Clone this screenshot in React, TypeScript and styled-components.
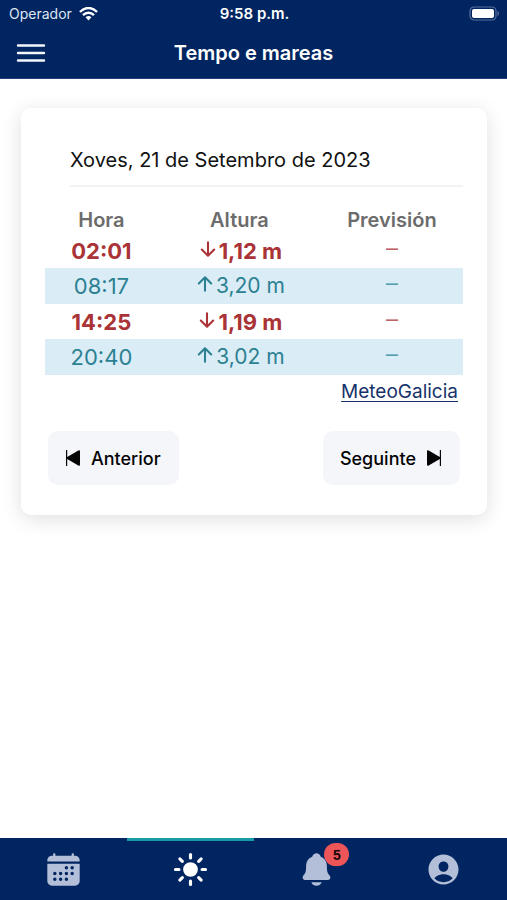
import React from "react";
import styled, { createGlobalStyle } from "styled-components";
import {
  IoArrowDown,
  IoArrowUp,
  IoCalendar,
  IoNotifications,
  IoPersonCircle,
  IoRemoveOutline,
  IoSunny,
} from "react-icons/io5";

const navy = "#002561";

const GlobalStyle = createGlobalStyle`
  *, *::before, *::after { box-sizing: border-box; }
  body { margin: 0; background: #fff; font-family: Inter, "Liberation Sans", sans-serif; }
`;

const Page = styled.div`
  min-height: 100vh;
  display: flex;
  flex-direction: column;
`;

const Header = styled.header`
  background: ${navy};
  color: #fff;
  border-bottom: 1px solid #1d417c;
`;

const StatusBar = styled.div`
  display: grid;
  grid-template-columns: 1fr auto 1fr;
  align-items: center;
  height: 27px;
  padding: 0 7px 0 9px;
  font-size: 14px;
`;

const Carrier = styled.span`
  display: flex;
  align-items: center;
  gap: 7px;
  color: #dfe6f2;
`;

const Clock = styled.span`
  font-size: 15px;
  font-weight: 600;
`;

const Battery = styled.svg`
  justify-self: end;
`;

const Toolbar = styled.div`
  display: grid;
  grid-template-columns: 48px 1fr 48px;
  align-items: center;
  height: 51px;
  padding: 0 7px;
`;

const MenuButton = styled.button`
  display: flex;
  justify-content: center;
  padding: 8px 0;
  border: 0;
  background: none;
  color: inherit;
`;

const Title = styled.h1`
  margin: 0;
  font-size: 20px;
  line-height: 24px;
  font-weight: 600;
  text-align: center;
`;

const Main = styled.main`
  flex: 1;
  padding: 29px 20px 29px 21px;
`;

const Card = styled.section`
  padding: 36px 24px 30px;
  border-radius: 10px;
  background: #fff;
  box-shadow: 0 4px 20px rgba(0, 0, 0, 0.13);
`;

const DateLine = styled.h2`
  margin: 0 0 20px 25px;
  padding: 3px 0 12px;
  border-bottom: 2px solid #f3f3f4;
  color: #111;
  font-size: 20px;
  line-height: 26px;
  font-weight: 400;
`;

const TideTable = styled.table`
  width: 100%;
  border-collapse: collapse;
  table-layout: fixed;
  text-align: center;
`;

const HeadCell = styled.th<{ $width: string }>`
  width: ${(p) => p.$width};
  height: 26px;
  padding: 0;
  color: #6c6c6c;
  font-size: 20px;
  line-height: 24px;
  font-weight: 600;
`;

const TideRow = styled.tr<{ $high: boolean }>`
  height: ${(p) => (p.$high ? 36 : 35)}px;
  background: ${(p) => (p.$high ? "#daecf6" : "transparent")};
  color: ${(p) => (p.$high ? "#2b8192" : "#a93336")};
  font-size: 22px;
  line-height: 26px;
  font-weight: ${(p) => (p.$high ? 400 : 700)};
`;

const Cell = styled.td`
  padding: 0;
`;

const Height = styled.span<{ $high: boolean }>`
  display: flex;
  justify-content: center;
  font-size: ${(p) => (p.$high ? 21 : 22)}px;
`;

const Forecast = styled.span`
  display: flex;
  justify-content: center;
  padding-bottom: 4px;
`;

const Source = styled.p`
  margin: 4px 5px 26px;
  text-align: right;
  font-size: 19px;
  line-height: 26px;
`;

const SourceLink = styled.a`
  color: #163369;
  text-underline-offset: 3px;
  text-decoration-thickness: 1px;
`;

const Pager = styled.div`
  display: flex;
  justify-content: space-between;
  padding: 0 3px;
`;

const PagerButton = styled.button`
  display: flex;
  align-items: center;
  gap: 10px;
  height: 54px;
  padding: 0 18px 0 17px;
  border: 0;
  border-radius: 10px;
  background: #f4f6fa;
  color: #050505;
  font-family: inherit;
  font-size: 18px;
  font-weight: 500;
`;

const TabBar = styled.nav`
  position: sticky;
  bottom: 0;
  display: grid;
  grid-template-columns: repeat(4, 1fr);
  height: 62px;
  background: ${navy};
`;

const Tab = styled.button<{ $active?: boolean }>`
  display: flex;
  align-items: center;
  justify-content: center;
  padding: 0 0 2px;
  border: 0;
  border-top: 3px solid ${(p) => (p.$active ? "#189aa8" : navy)};
  background: none;
  color: ${(p) => (p.$active ? "#fff" : "#b3bfd9")};
`;

const IconWrap = styled.span`
  position: relative;
  display: flex;
`;

const Badge = styled.span`
  position: absolute;
  top: -8px;
  right: -14px;
  display: flex;
  align-items: center;
  justify-content: center;
  width: 25px;
  height: 23px;
  border-radius: 12px;
  background: #ed5558;
  color: #16070a;
  font-size: 14px;
  font-weight: 700;
`;

const tides = [
  { time: "02:01", height: "1,12 m", high: false },
  { time: "08:17", height: "3,20 m", high: true },
  { time: "14:25", height: "1,19 m", high: false },
  { time: "20:40", height: "3,02 m", high: true },
];

const WifiIcon = () => (
  <svg width="19" height="14" viewBox="0 0 19 14" fill="none" stroke="#fff" strokeWidth="2.5" aria-hidden="true">
    <path d="M1 5C6-.3 13-.3 18 5" />
    <path d="M4 8.2c3.2-3.2 7.8-3.2 11 0" />
    <path d="M6.6 10.2c1.7-1.5 4.100-1.5 5.800 0L9.500 13.500z" fill="#fff" stroke="none" />
  </svg>
);

const BatteryIcon = () => (
  <Battery width="31" height="15" viewBox="0 0 31 15" aria-hidden="true">
    <rect x="1" y="1" width="26" height="13" rx="4" fill="none" stroke="#5a719c" strokeWidth="1.2" />
    <rect x="3" y="3" width="22" height="9" rx="2" fill="#fff" />
    <path d="M28.5 5v5c2-.8 2-4.2 0-5z" fill="#5a719c" />
  </Battery>
);

const MenuIcon = () => (
  <svg width="30" height="20" viewBox="0 0 30 20" stroke="#f3f6fb" strokeWidth="2.4" strokeLinecap="round" aria-hidden="true">
    <path d="M2 2.500h26M2 10h26M2 17.500h26" />
  </svg>
);

const SkipIcon = ({ forward = false }: { forward?: boolean }) => (
  <svg width="16" height="18" viewBox="0 0 16 18" fill="currentColor" aria-hidden="true">
    {forward ? (
      <path d="M1 2.500Q1 .6 2.700 1.500L13.800 8V1H15v16h-1.200v-7L2.700 16.500Q1 17.400 1 15.500z" />
    ) : (
      <path d="M15 2.500Q15 .6 13.300 1.500L2.200 8V1H1v16h1.200v-7l11.100 6.500q1.700.9 1.700-1z" />
    )}
  </svg>
);

export default function App() {
  return (
    <>
      <GlobalStyle />
      <Page>
        <Header>
          <StatusBar>
            <Carrier>
              Operador
              <WifiIcon />
            </Carrier>
            <Clock>9:58 p.m.</Clock>
            <BatteryIcon />
          </StatusBar>
          <Toolbar>
            <MenuButton aria-label="Menú">
              <MenuIcon />
            </MenuButton>
            <Title>Tempo e mareas</Title>
          </Toolbar>
        </Header>
        <Main>
          <Card>
            <DateLine>Xoves, 21 de Setembro de 2023</DateLine>
            <TideTable>
              <thead>
                <tr>
                  <HeadCell $width="27%">Hora</HeadCell>
                  <HeadCell $width="39%">Altura</HeadCell>
                  <HeadCell $width="34%">Previsión</HeadCell>
                </tr>
              </thead>
              <tbody>
                {tides.map((tide) => (
                  <TideRow key={tide.time} $high={tide.high}>
                    <Cell>{tide.time}</Cell>
                    <Cell>
                      <Height $high={tide.high}>
                        {tide.high ? <IoArrowUp size={22} /> : <IoArrowDown size={22} />}
                        {tide.height}
                      </Height>
                    </Cell>
                    <Cell>
                      <Forecast>
                        <IoRemoveOutline size={20} />
                      </Forecast>
                    </Cell>
                  </TideRow>
                ))}
              </tbody>
            </TideTable>
            <Source>
              <SourceLink href="#meteogalicia">MeteoGalicia</SourceLink>
            </Source>
            <Pager>
              <PagerButton>
                <SkipIcon />
                Anterior
              </PagerButton>
              <PagerButton>
                Seguinte
                <SkipIcon forward />
              </PagerButton>
            </Pager>
          </Card>
        </Main>
        <TabBar>
          <Tab aria-label="Calendario">
            <IoCalendar size={37} />
          </Tab>
          <Tab $active aria-label="Tempo">
            <IoSunny size={37} />
          </Tab>
          <Tab aria-label="Notificacións">
            <IconWrap>
              <IoNotifications size={37} />
              <Badge>5</Badge>
            </IconWrap>
          </Tab>
          <Tab aria-label="Perfil">
            <IoPersonCircle size={37} />
          </Tab>
        </TabBar>
      </Page>
    </>
  );
}
